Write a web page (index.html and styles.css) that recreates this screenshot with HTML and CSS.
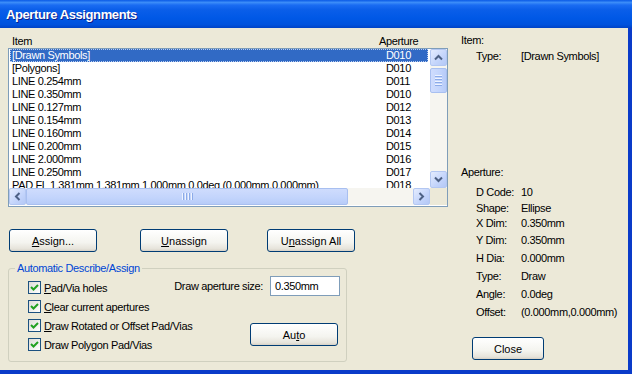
FILE: index.html
```html
<!DOCTYPE html>
<html lang="en">

<head>
    <meta charset="UTF-8">
    <title>Aperture Assignments</title>
    <link rel="stylesheet" href="styles.css">
</head>

<body>
    <div class="window">
        <div class="titlebar">Aperture Assignments</div>

        <div class="client">
            <div class="left-pane">
                <div class="list-head"><span>Item</span><span>Aperture</span></div>

                <div class="listbox">
                    <div class="rows">
                        <div class="row selected"><span>[Drawn Symbols]</span><span>D010</span></div>
                        <div class="row"><span>[Polygons]</span><span>D010</span></div>
                        <div class="row"><span>LINE 0.254mm</span><span>D011</span></div>
                        <div class="row"><span>LINE 0.350mm</span><span>D010</span></div>
                        <div class="row"><span>LINE 0.127mm</span><span>D012</span></div>
                        <div class="row"><span>LINE 0.154mm</span><span>D013</span></div>
                        <div class="row"><span>LINE 0.160mm</span><span>D014</span></div>
                        <div class="row"><span>LINE 0.200mm</span><span>D015</span></div>
                        <div class="row"><span>LINE 2.000mm</span><span>D016</span></div>
                        <div class="row"><span>LINE 0.250mm</span><span>D017</span></div>
                        <div class="row"><span>PAD FL 1.381mm 1.381mm 1.000mm 0.0deg (0.000mm,0.000mm)</span><span>D018</span></div>
                    </div>

                    <div class="vscroll">
                        <div class="sb-btn">
                            <svg viewBox="0 0 15 15" width="15" height="15"><polyline points="4,9.5 7.5,6 11,9.5" /></svg>
                        </div>
                        <div class="sb-thumb v-thumb">
                            <span></span><span></span><span></span><span></span>
                        </div>
                        <div class="sb-track"></div>
                        <div class="sb-btn">
                            <svg viewBox="0 0 15 15" width="15" height="15"><polyline points="4,5.5 7.5,9 11,5.5" /></svg>
                        </div>
                    </div>

                    <div class="hscroll">
                        <div class="sb-btn">
                            <svg viewBox="0 0 15 15" width="15" height="15"><polyline points="9.5,4 6,7.5 9.5,11" /></svg>
                        </div>
                        <div class="sb-thumb h-thumb">
                            <span></span><span></span><span></span><span></span>
                        </div>
                        <div class="sb-track"></div>
                        <div class="sb-btn">
                            <svg viewBox="0 0 15 15" width="15" height="15"><polyline points="5.5,4 9,7.5 5.5,11" /></svg>
                        </div>
                    </div>

                    <div class="corner"></div>
                </div>

                <div class="btn-row">
                    <button class="btn"><u>A</u>ssign...</button>
                    <button class="btn"><u>U</u>nassign</button>
                    <button class="btn btn-last">U<u>n</u>assign All</button>
                </div>

                <div class="group">
                    <div class="group-title">Automatic Describe/Assign</div>
                    <div class="group-body">
                        <div class="checks">
                            <label class="check"><span class="box"><svg viewBox="0 0 11 11" width="11" height="11"><polyline points="2,5 4.5,7.5 9,3" /></svg></span><u>P</u>ad/Via holes</label>
                            <label class="check"><span class="box"><svg viewBox="0 0 11 11" width="11" height="11"><polyline points="2,5 4.5,7.5 9,3" /></svg></span><u>C</u>lear current apertures</label>
                            <label class="check"><span class="box"><svg viewBox="0 0 11 11" width="11" height="11"><polyline points="2,5 4.5,7.5 9,3" /></svg></span><u>D</u>raw Rotated or Offset Pad/Vias</label>
                            <label class="check"><span class="box"><svg viewBox="0 0 11 11" width="11" height="11"><polyline points="2,5 4.5,7.5 9,3" /></svg></span>Draw Polygon Pad/Vias</label>
                        </div>
                        <div class="side">
                            <div class="field">
                                <span>Draw aperture size:</span>
                                <div class="input">0.350mm</div>
                            </div>
                            <button class="btn btn-auto">Au<u>t</u>o</button>
                        </div>
                    </div>
                </div>
            </div>

            <div class="right-pane">
                <div class="info-head">Item:</div>
                <div class="type-row"><span>Type:</span><span>[Drawn Symbols]</span></div>

                <div class="info-head aperture-head">Aperture:</div>
                <div class="info-grid">
                    <span>D Code:</span><span>10</span>
                    <span>Shape:</span><span>Ellipse</span>
                    <span>X Dim:</span><span>0.350mm</span>
                    <span>Y Dim:</span><span>0.350mm</span>
                    <span>H Dia:</span><span>0.000mm</span>
                    <span>Type:</span><span>Draw</span>
                    <span>Angle:</span><span>0.0deg</span>
                    <span>Offset:</span><span>(0.000mm,0.000mm)</span>
                </div>

                <button class="btn btn-close">Close</button>
            </div>
        </div>
    </div>
</body>

</html>
```

FILE: styles.css
```css
*, *::before, *::after {
    box-sizing: border-box;
}

:root {
    --face: #ece9d8;
    --frame: #0a3bc9;
    --field-border: #7f9db9;
    --select: #316ac5;
    --arrow: #4d6185;
}

body {
    margin: 0;
    background: var(--face);
    font-family: "Liberation Sans", Arial, sans-serif;
    font-size: 11px;
    letter-spacing: -0.35px;
    color: #000;
}

.window {
    width: 632px;
    height: 374px;
    display: flex;
    flex-direction: column;
    overflow: hidden;
}

.titlebar {
    height: 28px;
    flex: none;
    display: flex;
    align-items: center;
    padding-left: 6px;
    color: #fff;
    font-size: 13px;
    font-weight: bold;
    letter-spacing: -0.4px;
    text-shadow: 1px 1px #0c1f8a;
    background: linear-gradient(#0a5ae6 0%, #3b8cf8 9%, #1a6cf2 18%, #0a5ee9 35%, #0058e6 65%, #0052dd 88%, #0043c6 100%);
}

.client {
    flex: 1;
    display: flex;
    border-right: 4px solid var(--frame);
    border-bottom: 4px solid var(--frame);
}

/* left side: list, buttons, group */
.left-pane {
    width: 448px;
    flex: none;
    padding: 6px 0 0 8px;
    display: flex;
    flex-direction: column;
}

.list-head {
    height: 14px;
    line-height: 14px;
    display: grid;
    grid-template-columns: 367px auto;
    padding-left: 4px;
}

.listbox {
    width: 440px;
    height: 159px;
    border: 1px solid var(--field-border);
    background: #fff;
    display: grid;
    grid-template-columns: 421px 17px;
    grid-template-rows: 139px 17px;
}

.rows {
    overflow: hidden;
    padding: 0 2px 0 1px;
}

.row {
    height: 13px;
    line-height: 13px;
    display: grid;
    grid-template-columns: 374px auto;
    padding-left: 2px;
    white-space: nowrap;
}

.row.selected {
    background: var(--select);
    color: #fff;
    outline: 1px dotted #b9cdf0;
    outline-offset: -1px;
}

.vscroll,
.hscroll {
    display: flex;
    background: #f6f5f0;
}

.vscroll {
    flex-direction: column;
}

.sb-btn {
    width: 17px;
    height: 17px;
    flex: none;
    display: flex;
    align-items: center;
    justify-content: center;
    border: 1px solid #b3c7f2;
    border-radius: 2px;
    background: linear-gradient(135deg, #e4ecfe, #c3d4fb 60%, #b4c8f6);
}

.sb-btn svg polyline {
    fill: none;
    stroke: var(--arrow);
    stroke-width: 2;
}

.sb-track {
    flex: 1;
}

.sb-thumb {
    flex: none;
    display: flex;
    align-items: center;
    justify-content: center;
    gap: 1px;
    border: 1px solid #a8bff0;
    border-radius: 2px;
}

.v-thumb {
    height: 25px;
    margin-top: 2px;
    flex-direction: column;
    background: linear-gradient(90deg, #cfdcfd, #c2d4fc 60%, #b7cbf8);
}

.v-thumb span {
    width: 7px;
    height: 1px;
    background: #eef3fe;
    box-shadow: 0 1px #8cabe8;
    margin-bottom: 1px;
}

.h-thumb {
    width: 322px;
    background: linear-gradient(#cfdcfd, #c2d4fc 60%, #b7cbf8);
}

.h-thumb span {
    width: 1px;
    height: 7px;
    background: #eef3fe;
    box-shadow: 1px 0 #8cabe8;
    margin-right: 1px;
}

.corner {
    background: var(--face);
}

.btn {
    width: 88px;
    height: 23px;
    padding: 0;
    font: inherit;
    color: #000;
    border: 1px solid #003c74;
    border-radius: 3px;
    background: linear-gradient(#ffffff, #f4f4ef 60%, #e6e3da 90%, #d6d0c5);
}

.btn-row {
    display: flex;
    gap: 43px;
    margin-top: 22px;
    padding-left: 1px;
}

.btn-row .btn-last {
    margin-left: -4px;
}

/* group box */
.group {
    width: 339px;
    margin-top: 16px;
    border: 1px solid #d0d0bf;
    border-radius: 3px;
}

.group-title {
    width: max-content;
    margin: -7px 0 0 6px;
    padding: 0 2px;
    line-height: 13px;
    background: var(--face);
    color: #0046d5;
}

.group-body {
    display: flex;
    padding: 1px 0 7px 19px;
}

.checks {
    width: 145px;
    flex: none;
    margin-top: 2px;
}

.check {
    height: 19px;
    display: flex;
    align-items: center;
    white-space: nowrap;
}

.box {
    width: 13px;
    height: 13px;
    margin-right: 3px;
    display: flex;
    align-items: center;
    justify-content: center;
    border: 1px solid #1c5180;
    background: linear-gradient(135deg, #dcdcd7, #ffffff);
}

.box svg polyline {
    fill: none;
    stroke: #21a121;
    stroke-width: 2;
}

.side {
    width: 167px;
    display: flex;
    flex-direction: column;
    align-items: flex-end;
}

.field {
    display: flex;
    align-items: center;
    gap: 7px;
}

.input {
    width: 70px;
    height: 20px;
    line-height: 18px;
    padding-left: 4px;
    border: 1px solid var(--field-border);
    background: #fff;
}

.btn-auto {
    margin: 27px 2px 0 0;
}

/* right side: item / aperture details */
.right-pane {
    flex: 1;
    padding: 6px 0 0 13px;
    display: flex;
    flex-direction: column;
    align-items: flex-start;
}

.info-head {
    line-height: 13px;
}

.type-row {
    display: grid;
    grid-template-columns: 45px auto;
    padding-left: 15px;
    line-height: 16px;
    margin-top: 1px;
}

.aperture-head {
    margin-top: 102px;
}

.info-grid {
    display: grid;
    grid-template-columns: 45px auto;
    grid-template-rows: 16px 15px 16px repeat(5, 18px);
    align-items: center;
    padding-left: 15px;
    margin-top: 5px;
    white-space: nowrap;
}

.btn-close {
    width: 72px;
    margin: 16px 0 0 11px;
}
```
